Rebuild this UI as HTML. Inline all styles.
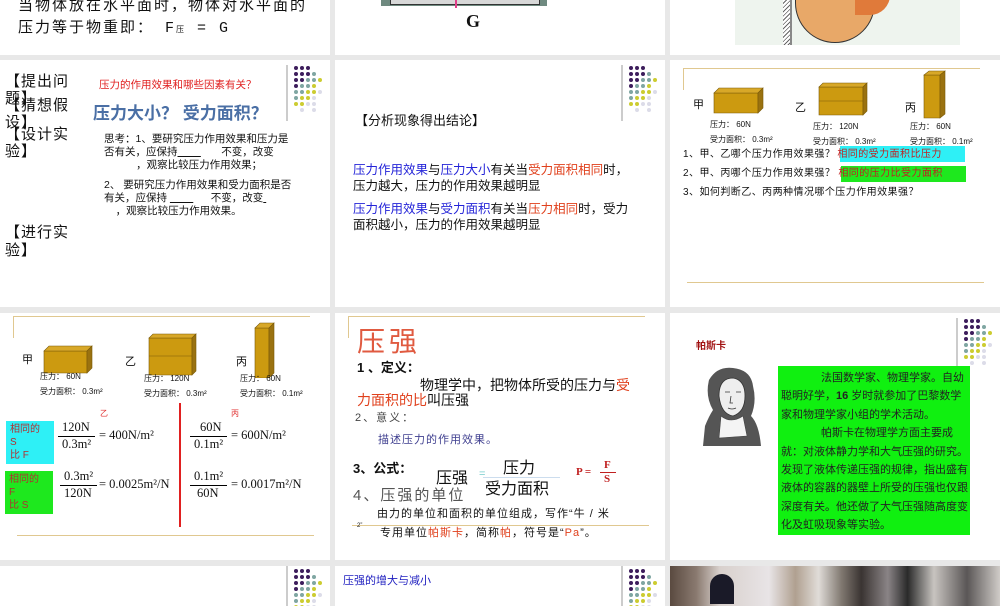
<!DOCTYPE html>
<html><head><meta charset="utf-8">
<style>
*{margin:0;padding:0;box-sizing:border-box}
body{width:1000px;height:600px;background:#e8e8e8;position:relative;overflow:hidden;font-family:"Liberation Sans","Noto Sans CJK SC",sans-serif;color:#111}
.s{position:absolute;background:#fff;overflow:hidden}
.a{position:absolute;white-space:nowrap}
.bl{color:#2424d8}.rd{color:#e0401c}
svg{position:absolute}
</style></head><body>
<svg width="0" height="0" style="position:absolute">
<defs>
<g id="dots">
<g fill="#3d1d5c"><circle cx="3" cy="3" r="2"/><circle cx="9" cy="3" r="2"/><circle cx="15" cy="3" r="2"/><circle cx="3" cy="9" r="2"/><circle cx="9" cy="9" r="2"/><circle cx="15" cy="9" r="2"/><circle cx="3" cy="15" r="2"/><circle cx="9" cy="15" r="2"/><circle cx="3" cy="21" r="2"/></g>
<g fill="#7fa6a2"><circle cx="21" cy="9" r="2"/><circle cx="15" cy="15" r="2"/><circle cx="21" cy="15" r="2"/><circle cx="9" cy="21" r="2"/><circle cx="15" cy="21" r="2"/><circle cx="3" cy="27" r="2"/><circle cx="9" cy="27" r="2"/><circle cx="3" cy="33" r="2"/></g>
<g fill="#cccc30"><circle cx="27" cy="15" r="2"/><circle cx="21" cy="21" r="2"/><circle cx="15" cy="27" r="2"/><circle cx="21" cy="27" r="2"/><circle cx="9" cy="33" r="2"/><circle cx="15" cy="33" r="2"/><circle cx="3" cy="39" r="2"/><circle cx="9" cy="39" r="2"/></g>
<g fill="#dcdce8"><circle cx="27" cy="27" r="2"/><circle cx="21" cy="33" r="2"/><circle cx="15" cy="39" r="2"/><circle cx="21" cy="39" r="2"/><circle cx="9" cy="45" r="2"/><circle cx="21" cy="45" r="2"/></g>
</g>
</defs></svg>

<!-- Row 0 -->
<div class="s" style="left:0;top:0;width:330px;height:55px">
<div class="a" style="left:18px;top:-6px;font-size:15px;letter-spacing:2px;font-family:'Liberation Mono','Noto Sans CJK SC',monospace">当物体放在水平面时，物体对水平面的</div>
<div class="a" style="left:18px;top:16px;font-size:15px;letter-spacing:2px;font-family:'Liberation Mono','Noto Sans CJK SC',monospace">压力等于物重即： F<span style="font-size:8px">压</span> = G</div>
</div>
<div class="s" style="left:335px;top:0;width:330px;height:55px">
<div style="position:absolute;left:46px;top:0;width:166px;height:6px;background:#6f8a80"></div>
<div style="position:absolute;left:55px;top:0;width:150px;height:5px;background:#d8d8d8;border:1px solid #333;border-top:none"></div>
<div style="position:absolute;left:120px;top:0;width:2px;height:8px;background:#e0408a"></div>
<div class="a" style="left:131px;top:11px;font-size:18px;font-weight:bold;font-family:'Liberation Serif',serif">G</div>
</div>
<div class="s" style="left:670px;top:0;width:330px;height:55px">
<div style="position:absolute;left:65px;top:0;width:225px;height:45px;background:#eef4ee"></div>
<div style="position:absolute;left:120px;top:0;width:2px;height:45px;background:#888"></div>
<div style="position:absolute;left:113px;top:0;width:7px;height:45px;background:repeating-linear-gradient(135deg,#fff 0 2px,#666 2px 3px)"></div>
<div style="position:absolute;left:125px;top:-20px;width:80px;height:63px;background:#e8a868;border-radius:0 0 40px 40px;border:1px solid #333"></div>
<div style="position:absolute;left:185px;top:-5px;width:35px;height:20px;background:#e07a3a;border-radius:0 0 20px 0"></div>
</div>

<!-- Row 1 -->
<div class="s" style="left:0;top:60px;width:330px;height:247px">
<svg style="left:286px;top:5px" width="40" height="60"><line x1="1" y1="0" x2="1" y2="56" stroke="#999"/><use href="#dots" x="7"/></svg>
<div class="a" style="left:5px;top:13px;font-size:15px;letter-spacing:1px;line-height:17px">【提出问<br>题】</div>
<div class="a" style="left:5px;top:37px;font-size:15px;letter-spacing:1px;line-height:17px">【猜想假<br>设】</div>
<div class="a" style="left:5px;top:66px;font-size:15px;letter-spacing:1px;line-height:17px">【设计实<br>验】</div>
<div class="a" style="left:5px;top:164px;font-size:15px;letter-spacing:1px;line-height:18px">【进行实<br>验】</div>
<div class="a" style="left:99px;top:17px;font-size:10.5px;color:#e02020">压力的作用效果和哪些因素有关？</div>
<div class="a" style="left:93px;top:39px;font-size:17px;font-weight:bold;color:#4a6fa5">压力大小？ 受力面积？</div>
<div class="a" style="left:104px;top:73px;font-size:10.5px;line-height:13px">思考：1、要研究压力作用效果和压力是<br>否有关，应保持<u>&nbsp;&nbsp;&nbsp;&nbsp;&nbsp;&nbsp;&nbsp;&nbsp;</u>&nbsp;&nbsp;&nbsp;&nbsp;&nbsp;&nbsp;&nbsp;不变，改变<br>&nbsp;&nbsp;&nbsp;&nbsp;&nbsp;&nbsp;&nbsp;&nbsp;&nbsp;&nbsp;&nbsp;，观察比较压力作用效果；</div>
<div class="a" style="left:104px;top:119px;font-size:10.5px;line-height:13px">2、 要研究压力作用效果和受力面积是否<br>有关，应保持 <u>&nbsp;&nbsp;&nbsp;&nbsp;&nbsp;&nbsp;&nbsp;&nbsp;</u>&nbsp;&nbsp;&nbsp;&nbsp;&nbsp;&nbsp;不变，改变<u>&nbsp;</u><br>&nbsp;&nbsp;&nbsp;&nbsp;，观察比较压力作用效果。</div>
</div>
<div class="s" style="left:335px;top:60px;width:330px;height:247px">
<svg style="left:286px;top:5px" width="40" height="60"><line x1="1" y1="0" x2="1" y2="56" stroke="#999"/><use href="#dots" x="7"/></svg>
<div class="a" style="left:20px;top:50px;font-size:13px">【分析现象得出结论】</div>
<div class="a" style="left:18px;top:102px;font-size:12.5px;line-height:16px"><span class="bl">压力作用效果</span>与<span class="bl">压力大小</span>有关当<span class="rd">受力面积相同</span>时，<br>压力越大，压力的作用效果越明显</div>
<div class="a" style="left:18px;top:141px;font-size:12.5px;line-height:16px"><span class="bl">压力作用效果</span>与<span class="bl">受力面积</span>有关当<span class="rd">压力相同</span>时，受力<br>面积越小，压力的作用效果越明显</div>
</div>
<div class="s" style="left:670px;top:60px;width:330px;height:247px">
<div style="position:absolute;left:13px;top:8px;width:297px;height:1px;background:#e0c890"></div>
<div style="position:absolute;left:13px;top:8px;width:1px;height:22px;background:#e0c890"></div>
<div style="position:absolute;left:17px;top:222px;width:297px;height:1px;background:#e0c890"></div>
<svg style="left:40px;top:10px" width="290" height="50">
<g stroke="#7a5a08" stroke-width=".6">
<polygon points="4,23 48,23 48,43 4,43" fill="#cc9a10"/><polygon points="4,23 9,18 53,18 48,23" fill="#d8a828"/><polygon points="48,23 53,18 53,38 48,43" fill="#9a7210"/>
<polygon points="109,17 153,17 153,45 109,45" fill="#cc9a10"/><line x1="109" y1="31" x2="153" y2="31"/><line x1="153" y1="31" x2="157" y2="27"/><polygon points="109,17 113,13 157,13 153,17" fill="#d8a828"/><polygon points="153,17 157,13 157,41 153,45" fill="#9a7210"/>
<polygon points="214,5 230,5 230,48 214,48" fill="#cc9a10"/><polygon points="214,5 219,1 235,1 230,5" fill="#d8a828"/><polygon points="230,5 235,1 235,44 230,48" fill="#9a7210"/>
</g></svg>
<div class="a" style="left:23px;top:36px;font-size:11px">甲</div>
<div class="a" style="left:125px;top:39px;font-size:11px">乙</div>
<div class="a" style="left:235px;top:39px;font-size:11px">丙</div>
<div class="a" style="left:40px;top:57px;font-size:8px;line-height:15px">压力： 60N<br>受力面积： 0.3m²</div>
<div class="a" style="left:143px;top:59px;font-size:8px;line-height:15px">压力： 120N<br>受力面积： 0.3m²</div>
<div class="a" style="left:240px;top:59px;font-size:8px;line-height:15px">压力： 60N<br>受力面积： 0.1m²</div>
<div style="position:absolute;left:170px;top:86px;width:125px;height:16px;background:#2ef0f6"></div>
<div style="position:absolute;left:171px;top:106px;width:125px;height:16px;background:#1ee81e"></div>
<div class="a" style="left:13px;top:85px;font-size:10px;line-height:19px;letter-spacing:.45px">1、甲、乙哪个压力作用效果强？<span style="color:#c02020;margin-left:2px">相同的受力面积比压力</span><br>2、甲、丙哪个压力作用效果强？<span style="color:#c02020;margin-left:3px">相同的压力比受力面积</span></div>
<div class="a" style="left:13px;top:123px;font-size:10px;letter-spacing:.45px">3、如何判断乙、丙两种情况哪个压力作用效果强？</div>
</div>

<!-- Row 2 -->
<div class="s" style="left:0;top:313px;width:330px;height:247px">
<div style="position:absolute;left:13px;top:3px;width:297px;height:1px;background:#e0c890"></div>
<div style="position:absolute;left:13px;top:3px;width:1px;height:22px;background:#e0c890"></div>
<div style="position:absolute;left:17px;top:222px;width:297px;height:1px;background:#e0c890"></div>
<svg style="left:40px;top:5px" width="290" height="60">
<g stroke="#7a5a08" stroke-width=".6">
<polygon points="4,33 47,33 47,55 4,55" fill="#cc9a10"/><polygon points="4,33 9,28 52,28 47,33" fill="#d8a828"/><polygon points="47,33 52,28 52,50 47,55" fill="#9a7210"/>
<polygon points="109,20 152,20 152,57 109,57" fill="#cc9a10"/><line x1="109" y1="38" x2="152" y2="38"/><line x1="152" y1="38" x2="156" y2="34"/><polygon points="109,20 113,16 156,16 152,20" fill="#d8a828"/><polygon points="152,20 156,16 156,53 152,57" fill="#9a7210"/>
<polygon points="215,10 229,10 229,60 215,60" fill="#cc9a10"/><polygon points="215,10 220,5 234,5 229,10" fill="#d8a828"/><polygon points="229,10 234,5 234,55 229,60" fill="#9a7210"/>
</g></svg>
<div class="a" style="left:22px;top:38px;font-size:11px">甲</div>
<div class="a" style="left:125px;top:40px;font-size:11px">乙</div>
<div class="a" style="left:236px;top:40px;font-size:11px">丙</div>
<div class="a" style="left:40px;top:56px;font-size:8px;line-height:15px">压力： 60N<br>受力面积： 0.3m²</div>
<div class="a" style="left:144px;top:58px;font-size:8px;line-height:15px">压力： 120N<br>受力面积： 0.3m²</div>
<div class="a" style="left:240px;top:58px;font-size:8px;line-height:15px">压力： 60N<br>受力面积： 0.1m²</div>
<div class="a" style="left:100px;top:95px;font-size:8px;color:#e03030">乙</div>
<div class="a" style="left:231px;top:95px;font-size:8px;color:#e03030">丙</div>
<div style="position:absolute;left:179px;top:90px;width:2px;height:124px;background:#e02020"></div>
<div style="position:absolute;left:6px;top:108px;width:48px;height:43px;background:#2ef0f6"></div>
<div class="a" style="left:10px;top:110px;font-size:10px;line-height:13px;color:#b03030">相同的<br>S<br>比 F</div>
<div style="position:absolute;left:5px;top:158px;width:48px;height:43px;background:#1ee81e"></div>
<div class="a" style="left:9px;top:160px;font-size:10px;line-height:13px;color:#b03030">相同的<br>F<br>比 S</div>
<div style="font-family:'Liberation Serif','Noto Serif CJK SC',serif;font-size:12.5px">
<div class="a" style="left:62px;top:107px">120N</div><div style="position:absolute;left:58px;top:123px;width:37px;height:1px;background:#000"></div><div class="a" style="left:62px;top:124px">0.3m²</div>
<div class="a" style="left:99px;top:115px">= 400N/m²</div>
<div class="a" style="left:200px;top:107px">60N</div><div style="position:absolute;left:190px;top:123px;width:37px;height:1px;background:#000"></div><div class="a" style="left:194px;top:124px">0.1m²</div>
<div class="a" style="left:231px;top:115px">= 600N/m²</div>
<div class="a" style="left:64px;top:156px">0.3m²</div><div style="position:absolute;left:60px;top:172px;width:37px;height:1px;background:#000"></div><div class="a" style="left:64px;top:173px">120N</div>
<div class="a" style="left:99px;top:164px">= 0.0025m²/N</div>
<div class="a" style="left:194px;top:156px">0.1m²</div><div style="position:absolute;left:190px;top:172px;width:37px;height:1px;background:#000"></div><div class="a" style="left:197px;top:173px">60N</div>
<div class="a" style="left:231px;top:164px">= 0.0017m²/N</div>
</div>
</div>
<div class="s" style="left:335px;top:313px;width:330px;height:247px">
<div style="position:absolute;left:13px;top:3px;width:297px;height:1px;background:#e0c890"></div>
<div style="position:absolute;left:13px;top:3px;width:1px;height:22px;background:#e0c890"></div>
<div style="position:absolute;left:17px;top:212px;width:297px;height:1px;background:#e0c890"></div>
<div class="a" style="left:22px;top:7px;font-size:28px;color:#e05a40;letter-spacing:4px">压强</div>
<div class="a" style="left:22px;top:44px;font-size:13px;font-weight:bold">1 、定义：</div>
<div class="a" style="left:85px;top:62px;font-size:14px">物理学中，把物体所受的压力与<span class="rd">受</span></div>
<div class="a" style="left:22px;top:77px;font-size:14px"><span class="rd">力面积的比</span>叫压强</div>
<div class="a" style="left:20px;top:96px;font-size:11px;color:#444;letter-spacing:2px">2、意义：</div>
<div class="a" style="left:43px;top:118px;font-size:11px;color:#404090;letter-spacing:1px">描述压力的作用效果。</div>
<div class="a" style="left:18px;top:145px;font-size:13px;font-weight:bold">3、公式：</div>
<div class="a" style="left:101px;top:151px;font-size:16px">压强</div>
<div class="a" style="left:144px;top:155px;font-size:11px;color:#7cc">=</div>
<div class="a" style="left:168px;top:141px;font-size:16px">压力</div>
<div style="position:absolute;left:148px;top:164px;width:77px;height:1px;background:#cde"></div>
<div class="a" style="left:150px;top:162px;font-size:16px">受力面积</div>
<div class="a" style="left:241px;top:153px;font-size:11px;font-weight:bold;color:#c02020;font-family:'Liberation Serif',serif">P =</div>
<div class="a" style="left:269px;top:146px;font-size:11px;font-weight:bold;color:#c02020;font-family:'Liberation Serif',serif">F</div>
<div style="position:absolute;left:265px;top:159px;width:16px;height:1px;background:#c02020"></div>
<div class="a" style="left:269px;top:160px;font-size:11px;font-weight:bold;color:#c02020;font-family:'Liberation Serif',serif">S</div>
<div class="a" style="left:18px;top:171px;font-size:15px;color:#555;letter-spacing:2px">4、压强的单位</div>
<div class="a" style="left:42px;top:192px;font-size:11px;letter-spacing:1px">由力的单位和面积的单位组成，写作“牛 / 米</div>
<div class="a" style="left:22px;top:210px;font-size:6px">2”</div>
<div class="a" style="left:45px;top:211px;font-size:11px;letter-spacing:1px">专用单位<span class="rd">帕斯卡</span>，简称<span class="rd">帕</span>，符号是“<span class="rd">Pa</span>”。</div>
</div>
<div class="s" style="left:670px;top:313px;width:330px;height:247px">
<svg style="left:286px;top:5px" width="40" height="60"><line x1="1" y1="0" x2="1" y2="56" stroke="#999"/><use href="#dots" x="7"/></svg>
<div class="a" style="left:26px;top:24px;font-size:10px;font-weight:bold;color:#a01010">帕斯卡</div>
<svg style="left:31px;top:53px" width="62" height="82" viewBox="0 0 62 82">
<rect width="62" height="82" fill="#fff"/>
<path d="M2 80 L4 60 Q8 50 12 44 Q4 30 8 14 Q16 0 32 2 Q50 4 52 20 Q56 36 50 50 Q58 58 60 80 Z" fill="#555"/>
<path d="M18 30 Q18 12 32 12 Q44 14 44 30 Q44 46 32 50 Q20 48 18 30Z" fill="#eee" stroke="#333" stroke-width=".8"/>
<path d="M20 50 Q30 58 42 50 L46 70 L18 72Z" fill="#f4f4f4" stroke="#444" stroke-width=".6"/>
<path d="M24 26 h5 M35 26 h5 M30 30 l-1 7 h3 M27 42 q4 2 8 0" stroke="#333" fill="none" stroke-width=".8"/>
</svg>
<div style="position:absolute;left:108px;top:53px;width:192px;height:169px;background:#10f010"></div>
<div style="position:absolute;left:111px;top:56px;width:188px;font-size:11px;line-height:18.4px;color:#222">
<div style="text-indent:40px">法国数学家、物理学家。自幼聪明好学，<b>16</b> 岁时就参加了巴黎数学家和物理学家小组的学术活动。</div>
<div style="text-indent:40px">帕斯卡在物理学方面主要成就：对液体静力学和大气压强的研究。发现了液体传递压强的规律，指出盛有液体的容器的器壁上所受的压强也仅跟深度有关。他还做了大气压强随高度变化及虹吸现象等实验。</div>
</div>
</div>

<!-- Row 3 -->
<div class="s" style="left:0;top:566px;width:330px;height:40px">
<svg style="left:286px;top:0" width="40" height="40"><line x1="1" y1="0" x2="1" y2="40" stroke="#999"/><use href="#dots" x="7" y="2"/></svg>
</div>
<div class="s" style="left:335px;top:566px;width:330px;height:40px">
<div class="a" style="left:8px;top:6px;font-size:11px;color:#2020c0">压强的增大与减小</div>
<svg style="left:286px;top:0" width="40" height="40"><line x1="1" y1="0" x2="1" y2="40" stroke="#999"/><use href="#dots" x="7" y="2"/></svg>
</div>
<div class="s" style="left:670px;top:566px;width:330px;height:40px;background:linear-gradient(90deg,#5a4a40 0,#8a7a70 8%,#d8d0cc 15%,#e8e4e6 30%,#b0a090 38%,#e0dcd8 45%,#807870 52%,#3a3432 58%,#8a8486 66%,#2a2a2a 72%,#c8c4c0 80%,#5a5656 90%,#d0ccc8 100%)">
<div style="position:absolute;left:40px;top:8px;width:24px;height:30px;border-radius:12px 12px 0 0;background:#1a1a28"></div>
</div>
</body></html>
